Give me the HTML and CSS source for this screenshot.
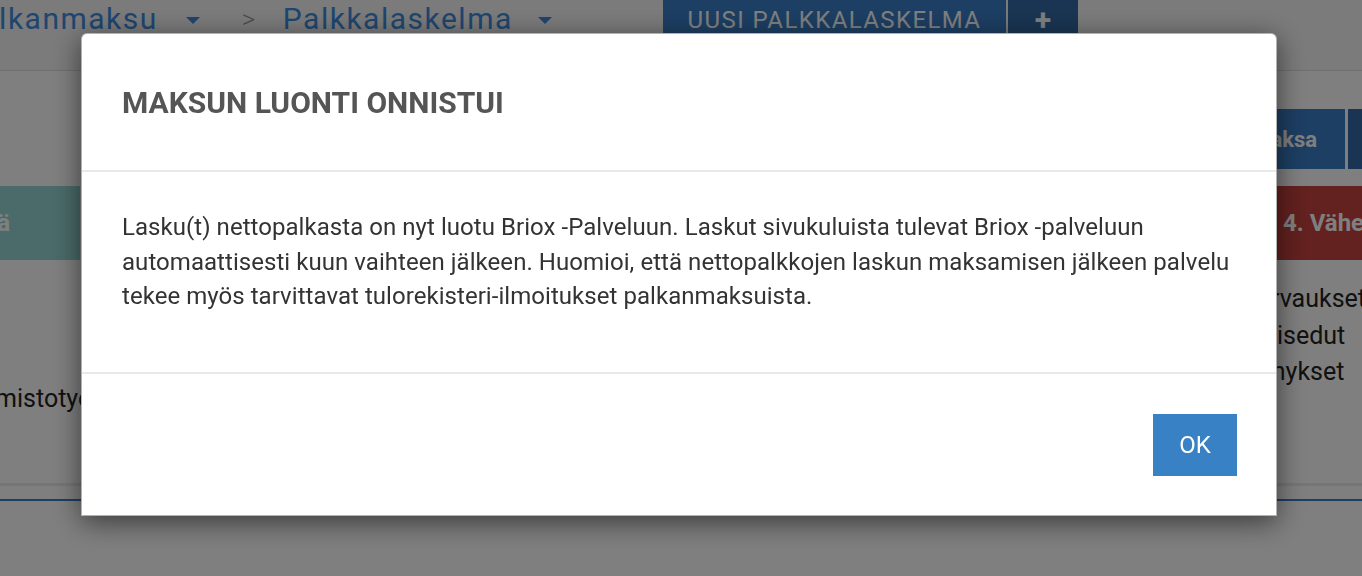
FILE: index.html
```html
<!DOCTYPE html>
<html lang="fi">
<head>
<meta charset="utf-8">
<title>Palkkalaskelma</title>
<link rel="stylesheet" href="styles.css">
</head>
<body>
<div class="page">
  <header class="nav">
    <div class="crumbs">
      <span class="crumb">Palkanmaksu <span class="caret caret-1"></span></span>
      <span class="sep">&gt;</span>
      <span class="crumb">Palkkalaskelma <span class="caret caret-2"></span></span>
    </div>
    <div class="nav-actions">
      <button class="btn-new">UUSI PALKKALASKELMA</button>
      <button class="btn-plus">+</button>
    </div>
  </header>
  <div class="toolbar">
    <div class="split">
      <button class="btn-pay">Tallenna ja maksa</button>
      <button class="btn-more"></button>
    </div>
  </div>
  <div class="steps">
    <div class="step step-teal">3. Työntekijä</div>
    <div class="step step-mid"></div>
    <div class="step step-red">4. Vähennykset</div>
  </div>
  <div class="content">
    <div class="col col-left">
      <p>Toimistotyö</p>
    </div>
    <div class="col col-right">
      <p class="r1">Kulukorvaukset</p>
      <p class="r2">Luontoisedut</p>
      <p class="r3">Vähennykset</p>
    </div>
  </div>
  <div class="rule-gray"></div>
  <div class="rule-blue"></div>
</div>

<div class="overlay">
  <div class="modal">
    <div class="modal-header">
      <h2 class="modal-title">MAKSUN LUONTI ONNISTUI</h2>
    </div>
    <div class="modal-body">
      <p>Lasku(t) nettopalkasta on nyt luotu Briox -Palveluun. Laskut sivukuluista tulevat Briox -palveluun automaattisesti kuun vaihteen jälkeen. Huomioi, että nettopalkkojen laskun maksamisen jälkeen palvelu tekee myös tarvittavat tulorekisteri-ilmoitukset palkanmaksuista.</p>
    </div>
    <div class="modal-footer">
      <button class="btn-ok">OK</button>
    </div>
  </div>
</div>
</body>
</html>
```

FILE: styles.css
```css
* { box-sizing: border-box; }
html, body { margin: 0; padding: 0; }
body {
  width: 1362px;
  height: 576px;
  overflow: hidden;
  background: #ffffff;
  font-family: Roboto, "Liberation Sans", sans-serif;
  color: #333;
}
button { font-family: inherit; border: 0; cursor: pointer; }

.page { width: 1362px; height: 576px; overflow: hidden; }

.nav {
  height: 71px;
  background: #f6f6f6;
  border-bottom: 1px solid #dedede;
  display: flex;
  align-items: flex-start;
}
.crumbs {
  margin-left: -39px;
  display: flex;
  align-items: center;
  height: 37px;
  color: #3d8ce0;
  font-size: 30px;
  letter-spacing: 1.5px;
  width: 702px;
  flex: none;
  white-space: nowrap;
}
.crumb { display: inline-flex; align-items: center; }
.caret {
  display: inline-block;
  width: 0; height: 0;
  border-left: 7px solid transparent;
  border-right: 7px solid transparent;
  border-top: 7px solid #3d8ce0;
  margin-top: 4px;
}
.caret-1 { margin-left: 28px; }
.caret-2 { margin-left: 25px; }
.sep { color: #999; font-size: 26px; font-weight: 300; margin: 0 26px 0 42px; }
.nav-actions { display: flex; height: 35px; margin-top: -2px; flex: none; }
.btn-new {
  background: #3a7ec7;
  color: #fff;
  font-size: 24px;
  letter-spacing: 1.4px;
  width: 343px;
  padding: 8px 0 0;
}
.btn-plus {
  margin-left: 2px;
  width: 70px;
  background: #336ba6;
  color: #fff;
  font-size: 30px;
  font-weight: 700;
  padding-top: 4px;
}

.toolbar {
  display: flex;
  justify-content: flex-end;
  padding-top: 38px;
  height: 115px;
}
.split { display: flex; height: 60px; margin-right: -120px; flex: none; }
.btn-pay {
  background: #3a7ec7;
  color: #fff;
  font-weight: 700;
  font-size: 22px;
  width: 250px;
  padding-right: 28px;
  text-align: right;
  white-space: nowrap;
}
.btn-more { width: 134px; margin-left: 3px; background: #336ba6; }

.steps {
  display: flex;
  height: 74px;
}
.step {
  display: flex;
  align-items: center;
  color: #fff;
  font-weight: 700;
  font-size: 24px;
  white-space: nowrap;
  overflow: hidden;
  flex: none;
}
.step-teal { background: #95d6d2; width: 300px; margin-left: -220px; justify-content: flex-end; padding-right: 70px; }
.step-mid { flex: 1; background: #fff; }
.step-red { background: #c6423e; width: 100px; padding-left: 21px; }

.content {
  display: flex;
  justify-content: space-between;
  height: 223px;
  padding-top: 21px;
  font-size: 25px;
  color: #222;
}
.content p { margin: 0; line-height: 36.5px; white-space: nowrap; }
.col-left { margin-left: -39px; padding-top: 100px; flex: none; }
.col-right { width: 220px; flex: none; margin-right: -10px; }
.col-right .r1 { margin-left: 43px; }
.col-right .r2 { margin-left: 48px; }
.col-right .r3 { margin-left: 50px; }

.rule-gray { height: 3px; background: #ececec; }
.rule-blue { height: 2px; background: #3a7ec7; margin-top: 13px; }

.overlay {
  position: fixed;
  inset: 0;
  background: rgba(0, 0, 0, 0.5);
  display: flex;
  align-items: flex-start;
  padding: 33px 0 0 81px;
}
.modal {
  width: 1196px;
  background: #fff;
  border: 1px solid rgba(0, 0, 0, 0.3);
  border-radius: 6px 6px 0 0;
  box-shadow: 0 6px 28px rgba(0, 0, 0, 0.55);
}
.modal-header {
  height: 138px;
  padding: 0 40px;
  display: flex;
  align-items: center;
  border-bottom: 2px solid #e9e9e9;
}
.modal-title {
  margin: 0;
  font-size: 30px;
  font-weight: 700;
  color: #555;
}
.modal-body {
  height: 202px;
  padding: 38px 20px 0 40px;
  border-bottom: 2px solid #e9e9e9;
}
.modal-body p {
  margin: 0;
  font-size: 24px;
  letter-spacing: 0.05px;
  line-height: 34.5px;
  color: #333;
}
.modal-footer {
  height: 141px;
  padding: 40px 39px 0;
  display: flex;
  justify-content: flex-end;
  align-items: flex-start;
}
.btn-ok {
  width: 84px;
  height: 62px;
  background: #3781c4;
  color: #fff;
  font-size: 24px;
}
```
